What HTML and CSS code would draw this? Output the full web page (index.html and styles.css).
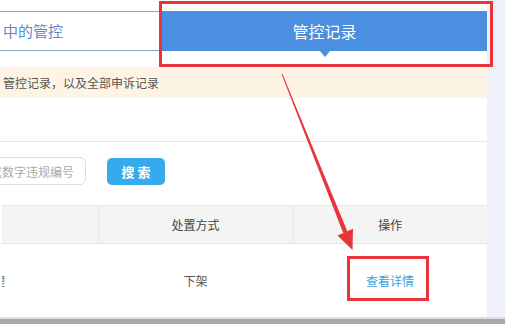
FILE: index.html
```html
<!DOCTYPE html>
<html lang="zh-CN">
<head>
    <meta charset="UTF-8">
    <meta name="viewport" content="width=device-width, initial-scale=1.0">
    <title>管控记录</title>
    <link rel="stylesheet" href="styles.css">
</head>
<body>
    <div class="page">
        <div class="wrap">
            <div class="content">
                <div class="tabs">
                    <div class="tab">中的管控</div>
                    <div class="tab active">管控记录</div>
                </div>

                <div class="notice">管控记录，以及全部申诉记录</div>

                <div class="filter">
                    <input type="text" class="search-input" placeholder="名称或数字违规编号">
                    <button class="search-btn">搜 索</button>
                </div>

                <table class="records">
                    <thead>
                        <tr>
                            <th class="col-a"></th>
                            <th class="col-b">处置方式</th>
                            <th class="col-c">操作</th>
                        </tr>
                    </thead>
                    <tbody>
                        <tr>
                            <td class="col-a"><span class="cut">理</span></td>
                            <td class="col-b">下架</td>
                            <td class="col-c"><a href="#" class="detail">查看详情</a></td>
                        </tr>
                    </tbody>
                </table>
            </div>
            <div class="side"></div>
        </div>
        <div class="bottom"></div>

        <!-- annotations drawn over the screenshot -->
        <svg class="marks" width="505" height="324" viewBox="0 0 505 324">
            <rect x="160.5" y="2.5" width="331" height="63" fill="none" stroke="#e8343a" stroke-width="3"/>
            <rect x="348.5" y="257.5" width="79" height="42" fill="none" stroke="#e8343a" stroke-width="3"/>
            <polygon points="281.6,74.2 282.4,73.8 347.4,231.5 343.2,233.1" fill="#e8343a"/>
            <polygon points="353,228.8 337.5,235.5 352.5,250" fill="#e8343a"/>
        </svg>
    </div>
</body>
</html>
```

FILE: styles.css
```css
* {
    margin: 0;
    padding: 0;
    box-sizing: border-box;
    font-family: "Noto Sans CJK SC", "Liberation Sans", sans-serif;
}

body {
    background: #fff;
    overflow: hidden;
}

.page {
    position: relative;
    width: 505px;
    height: 324px;
    display: flex;
    flex-direction: column;
}

.wrap {
    flex: 1;
    display: flex;
}

.content {
    width: 487px;
    background: #fff;
    overflow: hidden;
}

.side {
    flex: 1;
    background: #eef2f8;
}

.bottom {
    height: 8px;
    background: #a9a9a9;
    border-top: 2px solid #dedede;
}

/* tabs */
.tabs {
    display: flex;
    margin-top: 11px;
    height: 40px;
}

.tab {
    width: 162px;
    border-top: 1px solid #8ea5c2;
    border-bottom: 1px solid #8ea5c2;
    color: #5b8dc6;
    font-size: 15px;
    line-height: 38px;
    padding-left: 3px;
}

.tab.active {
    flex: 1;
    position: relative;
    border: none;
    background: #4a8fe0;
    color: #fff;
    font-size: 16px;
    line-height: 40px;
    text-align: center;
    padding-left: 0;
}

.tab.active::after {
    content: "";
    position: absolute;
    left: 158px;
    top: 40px;
    border-left: 5px solid transparent;
    border-right: 5px solid transparent;
    border-top: 6px solid #4a8fe0;
}

.notice {
    margin-top: 16px;
    height: 31px;
    line-height: 31px;
    background: #fdf4e5;
    color: #555;
    font-size: 12px;
    padding-left: 3px;
}

/* search */
.filter {
    margin-top: 43px;
    border-top: 1px solid #e8e8e8;
    padding-top: 15px;
    display: flex;
    align-items: center;
    gap: 21px;
}

.search-input {
    margin-left: -40px;
    width: 126px;
    height: 28px;
    border: 1px solid #dcdcdc;
    border-radius: 6px;
    padding-left: 5px;
    font-size: 12px;
    outline: none;
}

.search-input::placeholder {
    color: #aaa;
}

.search-btn {
    width: 58px;
    height: 27px;
    border: none;
    border-radius: 5px;
    background: #35abee;
    color: #fff;
    font-size: 13px;
    font-weight: bold;
}

/* table */
.records {
    margin-top: 20px;
    margin-left: 2px;
    width: 485px;
    border-collapse: collapse;
    table-layout: fixed;
    font-size: 12px;
    color: #555;
}

.records th {
    height: 38px;
    background: #f4f4f4;
    font-weight: normal;
    color: #444;
    border-top: 1px solid #e6e6e6;
    border-bottom: 1px solid #e6e6e6;
}

.records th + th {
    border-left: 1px solid #e6e6e6;
}

.records td {
    height: 73px;
    text-align: center;
}

.col-a {
    width: 96px;
}

.col-b {
    width: 195px;
}

.records td.col-a {
    text-align: left;
    overflow: hidden;
}

.cut {
    display: inline-block;
    margin-left: -9px;
    color: #666;
}

.detail {
    color: #3aa0d8;
    text-decoration: none;
}

.marks {
    position: absolute;
    left: 0;
    top: 0;
    pointer-events: none;
}
```
